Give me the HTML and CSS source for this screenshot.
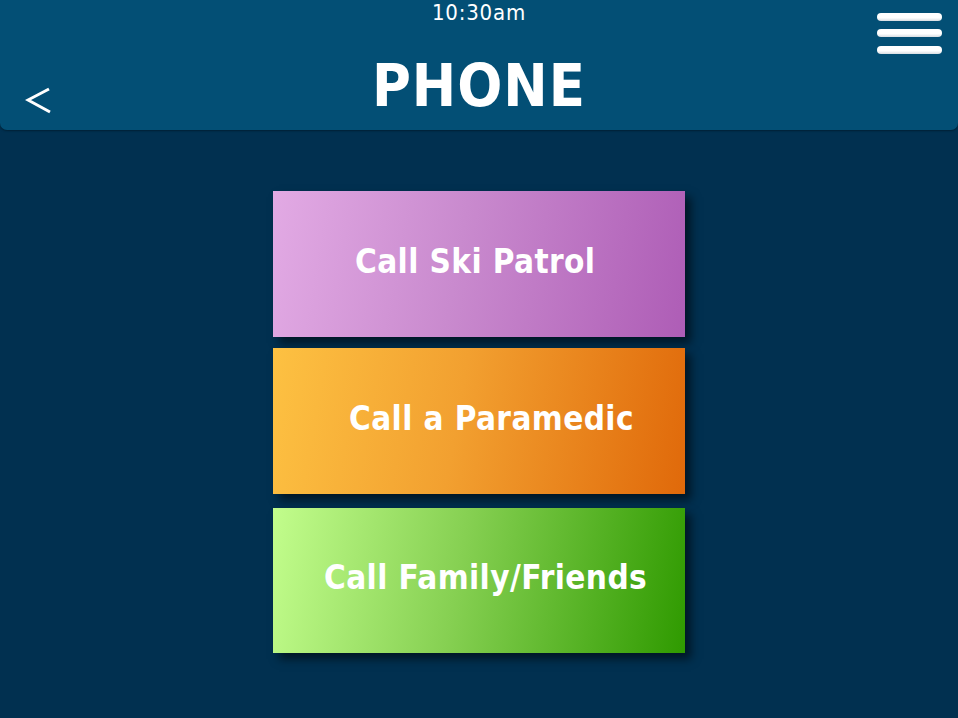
FILE: index.html
```html
<!DOCTYPE html>
<html lang="en">
<head>
<meta charset="utf-8">
<title>Phone</title>
<link rel="stylesheet" href="styles.css">
</head>
<body>
<div class="screen">
  <header class="topbar">
    <div class="back">
      <svg width="30" height="32" viewBox="0 0 30 32" aria-hidden="true">
        <polyline points="24,3 3,14 25,26" fill="none" stroke="#ffffff" stroke-width="3" stroke-linejoin="miter"/>
      </svg>
    </div>
    <div class="time">10:30am</div>
    <h1 class="title">PHONE</h1>
    <div class="menu" aria-label="menu">
      <span class="bar"></span>
      <span class="bar"></span>
      <span class="bar"></span>
    </div>
  </header>
  <main class="options">
    <button class="option ski">Call Ski Patrol</button>
    <button class="option medic">Call a Paramedic</button>
    <button class="option family">Call Family/Friends</button>
  </main>
</div>
</body>
</html>
```
FILE: styles.css
```css
html, body {
  margin: 0;
  padding: 0;
}
body {
  background: #003050;
  font-family: "DejaVu Sans Condensed", "DejaVu Sans", sans-serif;
  color: #ffffff;
}
.screen {
  width: 958px;
  height: 718px;
  background: #013050;
  overflow: hidden;
}
.topbar {
  height: 130px;
  background: #034f75;
  border-radius: 0 0 7px 7px;
  display: grid;
  grid-template-columns: 100px 1fr 100px;
  grid-template-rows: 30px 100px;
  box-shadow: 0 1px 2px rgba(0,0,0,0.35);
}
.back {
  grid-column: 1;
  grid-row: 2;
  padding: 56px 0 0 25px;
}
.back svg { display: block; }
.time {
  grid-column: 2;
  grid-row: 1;
  text-align: center;
  font-size: 22px;
  line-height: 24px;
  padding-top: 1px;
  letter-spacing: 0.8px;
}
.title {
  grid-column: 2;
  grid-row: 2;
  margin: 0;
  text-align: center;
  font-weight: bold;
  font-size: 59px;
  line-height: 60px;
  padding-top: 26px;
  letter-spacing: 1px;
}
.menu {
  grid-column: 3;
  grid-row: 1 / span 2;
  display: flex;
  flex-direction: column;
  gap: 8px;
  padding: 13px 0 0 19px;
}
.bar {
  display: block;
  width: 65px;
  height: 8px;
  border-radius: 4px;
  background: linear-gradient(#ffffff 60%, #d8dde2);
}
.bar:last-child {
  margin-top: 1px;
}
.options {
  display: flex;
  flex-direction: column;
  align-items: center;
  padding-top: 61px;
}
.option {
  width: 412px;
  height: 146px;
  border: none;
  margin: 0;
  padding: 0 0 6px 0;
  display: flex;
  align-items: center;
  font-family: "DejaVu Sans Condensed", "DejaVu Sans", sans-serif;
  font-weight: bold;
  font-size: 33px;
  letter-spacing: 0.4px;
  color: #ffffff;
  box-shadow: 6px 6px 9px rgba(0,0,0,0.55);
  text-align: left;
}
.ski {
  background: linear-gradient(100deg, #e2aae4 0%, #c98ace 45%, #ae5db6 100%);
  padding-left: 82px;
}
.medic {
  margin-top: 11px;
  background: linear-gradient(100deg, #fdc142 0%, #f2a030 45%, #e0690a 100%);
  padding-left: 76px;
}
.family {
  margin-top: 14px;
  height: 145px;
  background: linear-gradient(100deg, #c2fd8c 0%, #86d052 45%, #2f9a00 100%);
  padding-left: 51px;
}
```
